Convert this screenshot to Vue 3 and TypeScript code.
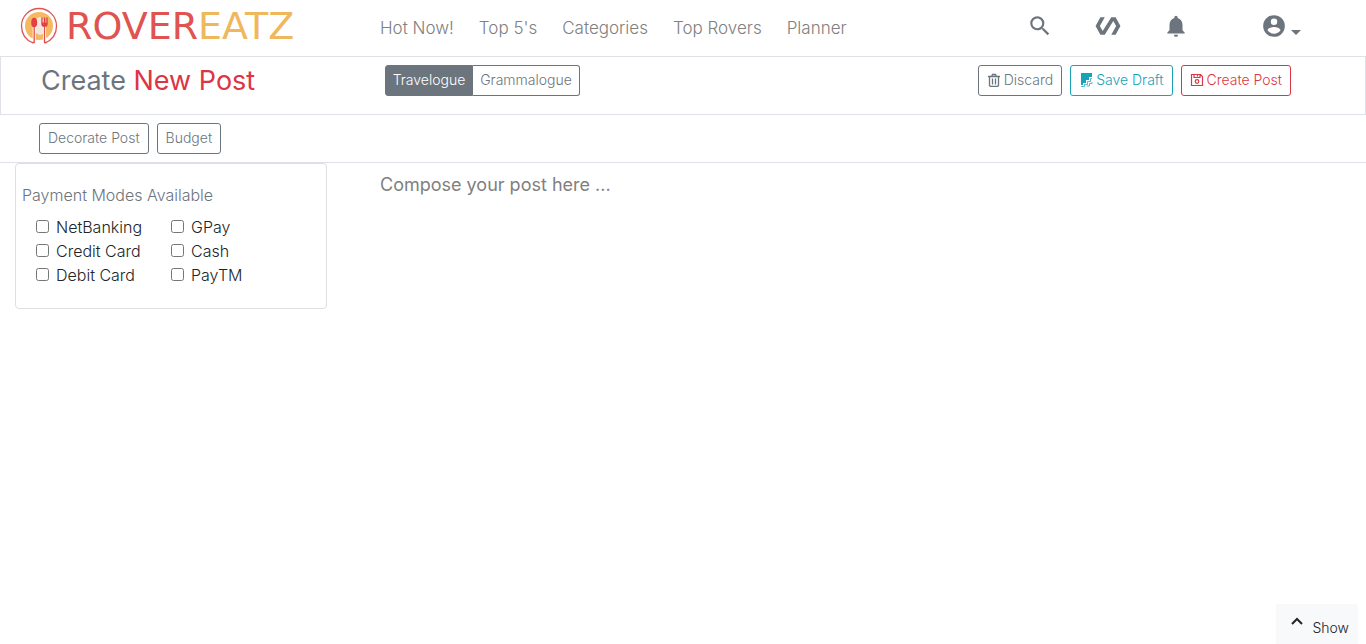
<script setup lang="ts">
import { ref } from 'vue'

const navLinks: string[] = ['Hot Now!', "Top 5's", 'Categories', 'Top Rovers', 'Planner']
const postKinds: string[] = ['Travelogue', 'Grammalogue']
const activeKind = ref<string>('Travelogue')
const paymentModes: string[] = ['NetBanking', 'GPay', 'Credit Card', 'Cash', 'Debit Card', 'PayTM']
const selectedModes = ref<string[]>([])
const body = ref<string>('')
</script>

<template>
  <div class="page">
    <header class="navbar columns">
      <a class="brand" href="#" aria-label="Rovereatz home">
        <svg class="brand-mark" viewBox="0 0 38 38" aria-hidden="true">
          <circle cx="19" cy="19" r="14" fill="#f5b962" />
          <ellipse cx="20" cy="19" rx="6" ry="9" fill="#f4e6dc" />
          <path d="M13 36C6 33 1.500 27 1.500 19a17.500 17.500 0 0 1 35 0c0 8-4.500 14-11.500 17" fill="none" stroke="#df5554" stroke-width="1.300" />
          <path d="M14.200 20v16M24.500 20v16" stroke="#fff" stroke-width="3" />
          <path d="M14.200 20v15.500h-2M24.500 20v15.500h2" fill="none" stroke="#df4e4e" stroke-width="1.300" />
          <ellipse cx="14.200" cy="15.500" rx="3" ry="4.800" fill="#e34045" />
          <path d="M21.300 10.500h1.300v5h1.200v-5h1.400v5h1.200v-5h1.300v6.500q0 3-3.200 3t-3.200-3z" fill="#e34045" />
        </svg>
        <span class="brand-name">ROVER<span class="gold">EATZ</span></span>
      </a>
      <nav class="nav-links" aria-label="Main">
        <a v-for="link in navLinks" :key="link" href="#">{{ link }}</a>
      </nav>
      <div class="nav-icons">
        <button type="button" aria-label="Search">
          <svg width="26" height="26" viewBox="0 0 24 24"><path d="M15.500 14h-.79l-.28-.27A6.470 6.470 0 0 0 16 9.500 6.500 6.500 0 1 0 9.500 16c1.610 0 3.090-.59 4.230-1.570l.27.28v.79l5 4.990L20.490 19l-4.990-5zm-6 0C7.010 14 5 11.990 5 9.500S7.010 5 9.500 5 14 7.010 14 9.500 11.990 14 9.500 14z" /></svg>
        </button>
        <button type="button" aria-label="Feed">
          <svg width="26" height="26" viewBox="0 0 24 24"><path d="M19 4h-4L7.110 16.630 4.500 12 9 4H5L.5 12 5 20h4l7.890-12.630L19.500 12 15 20h4l4.500-8z" /></svg>
        </button>
        <button type="button" aria-label="Notifications">
          <svg width="26" height="26" viewBox="0 0 24 24"><path d="M12 22c1.100 0 2-.9 2-2h-4c0 1.100.9 2 2 2zm6-6v-5c0-3.070-1.640-5.640-4.500-6.320V4c0-.83-.67-1.500-1.500-1.500s-1.500.67-1.500 1.500v.68C7.630 5.360 6 7.920 6 11v5l-2 2v1h16v-1l-2-2z" /></svg>
        </button>
        <button class="account" type="button" aria-label="Account menu">
          <svg width="26" height="26" viewBox="0 0 24 24"><path d="M12 2a10 10 0 1 0 0 20 10 10 0 0 0 0-20zm0 3a3 3 0 1 1 0 6 3 3 0 0 1 0-6zm0 14.200a7.200 7.200 0 0 1-6-3.220c.03-1.990 4-3.080 6-3.080s5.970 1.090 6 3.080a7.200 7.200 0 0 1-6 3.220z" /></svg>
          <span class="caret"></span>
        </button>
      </div>
    </header>

    <section class="title-bar columns">
      <h1>Create <span>New Post</span></h1>
      <div class="segments" role="group" aria-label="Post type">
        <button
          v-for="kind in postKinds"
          :key="kind"
          type="button"
          class="btn"
          :class="{ active: activeKind === kind }"
          :aria-pressed="activeKind === kind"
          @click="activeKind = kind"
        >{{ kind }}</button>
      </div>
      <div class="actions">
        <button type="button" class="btn">
          <svg width="14" height="14" viewBox="0 0 14 14" fill="none" stroke="currentColor" stroke-width="1.300"><path d="M1 3.500h12M4.500 3.500l1-2h3l1 2M2.500 3.500v9l1 1h7l1-1v-9M5.500 5.500v6M8.500 5.500v6" /></svg>
          Discard
        </button>
        <button type="button" class="btn info">
          <svg width="14" height="14" viewBox="0 0 14 14"><path d="M2 0h11v4h-3v3H7v3H4v2H2z" fill="currentColor" /><path d="M13 5.500h-1.500v3H8.500v3H5.500v2H2M13 9v1.500h-2.500V13H7.500" fill="none" stroke="currentColor" stroke-opacity=".7" /></svg>
          Save Draft
        </button>
        <button type="button" class="btn danger">
          <svg width="14" height="14" viewBox="0 0 14 14" fill="none" stroke="currentColor" stroke-width="1.200"><path d="M1.500 1.500h9l2 2v9h-11zM4 1.500v3h6v-3M7.500 2v1.500" /><circle cx="7" cy="8.500" r="1.800" /></svg>
          Create Post
        </button>
      </div>
    </section>

    <section class="tool-bar">
      <button type="button" class="btn">Decorate Post</button>
      <button type="button" class="btn">Budget</button>
    </section>

    <main class="workspace columns">
      <fieldset class="payments">
        <legend>Payment Modes Available</legend>
        <div class="modes">
          <label v-for="mode in paymentModes" :key="mode">
            <input v-model="selectedModes" type="checkbox" :value="mode" />
            {{ mode }}
          </label>
        </div>
      </fieldset>
      <textarea v-model="body" class="composer" aria-label="Post body" placeholder="Compose your post here ..."></textarea>
    </main>

    <button type="button" class="show">
      <svg width="12" height="8" viewBox="0 0 12 8" fill="none" stroke="currentColor" stroke-width="2"><path d="M1 7l5-5 5 5" /></svg>
      <span>Show</span>
    </button>
  </div>
</template>

<style>
body {
  margin: 0;
  background: #fff;
}
</style>

<style scoped>
.page {
  min-height: 100vh;
  font-family: Inter, "Liberation Sans", sans-serif;
  font-size: 16px;
  font-weight: 300;
  line-height: 24px;
  color: #212529;
}

.page *,
.page *::before {
  box-sizing: border-box;
}

button {
  font-family: inherit;
  font-weight: inherit;
  cursor: pointer;
}

.columns {
  display: grid;
  grid-template-columns: 380px minmax(0, 1fr) auto;
}

.navbar {
  height: 56px;
  align-items: center;
}

.brand {
  display: flex;
  align-items: center;
  gap: 8px;
  padding: 0 0 4px 20px;
  text-decoration: none;
}

.brand-mark {
  width: 38px;
  height: 38px;
}

.brand-name {
  font-family: "DejaVu Sans", sans-serif;
  font-size: 38px;
  font-weight: 400;
  line-height: 40px;
  color: #df5350;
}

.gold {
  color: #f0b85c;
}

.nav-links {
  display: flex;
  gap: 25px;
}

.nav-links a {
  color: #808080;
  font-size: 17px;
  text-decoration: none;
  white-space: nowrap;
}

.nav-icons {
  display: flex;
  align-items: center;
  gap: 42px;
  padding: 0 65px 4px 0;
}

.nav-icons button {
  display: flex;
  padding: 0;
  border: 0;
  background: none;
  color: #6c757d;
}

.nav-icons svg {
  fill: currentColor;
}

.nav-icons .account {
  align-items: center;
  gap: 4px;
  margin-left: 30px;
}

.caret {
  margin-top: 12px;
  border: 5px solid transparent;
  border-top-color: currentColor;
  border-bottom: 0;
}

.title-bar {
  min-height: 59px;
  padding-top: 8px;
  border: 1px solid #dee2e6;
  align-items: start;
}

h1 {
  margin: 0;
  padding-left: 40px;
  color: #6c757d;
  font-size: 27px;
  font-weight: 400;
  line-height: 32px;
}

h1 span {
  color: #dc3545;
}

.btn {
  display: inline-flex;
  align-items: center;
  justify-content: center;
  gap: 3px;
  height: 31px;
  padding: 0 8px 2px;
  border: 1px solid #6c757d;
  border-radius: 3px;
  background: #fff;
  color: #6c757d;
  font-size: 14px;
  line-height: 21px;
  white-space: nowrap;
}

.btn.active {
  background: #6c757d;
  color: #fff;
}

.btn.info {
  border-color: #17a2b8;
  color: #17a2b8;
}

.btn.danger {
  border-color: #dc3545;
  color: #dc3545;
}

.segments {
  display: grid;
  grid-template-columns: 88px 107px;
  padding-left: 4px;
}

.segments .btn {
  padding: 0 0 2px;
}

.segments .btn:first-child {
  border-radius: 3px 0 0 3px;
}

.segments .btn:last-child {
  border-left: 0;
  border-radius: 0 3px 3px 0;
}

.actions {
  display: flex;
  gap: 8px;
  padding-right: 74px;
}

.tool-bar {
  display: flex;
  gap: 8px;
  padding: 8px 39px;
  border-bottom: 1px solid #dee2e6;
}

.payments {
  min-width: 0;
  min-height: 146px;
  margin: 0 53px 0 15px;
  padding: 19px 6px;
  border: 1px solid #dfdfdf;
  border-radius: 4px;
  align-self: start;
}

.payments legend {
  float: left;
  width: 100%;
  padding: 0;
  color: #6c757d;
}

.modes {
  display: grid;
  grid-template-columns: 135px 1fr;
  clear: both;
  padding: 8px 0 0 14px;
}

.modes label {
  display: flex;
  align-items: center;
  gap: 7px;
  white-space: nowrap;
}

.modes input {
  width: 13px;
  height: 13px;
  margin: 0 0 2px;
}

.composer {
  height: 320px;
  padding: 8px 0;
  border: 0;
  outline: 0;
  resize: none;
  background: none;
  font-family: inherit;
  font-size: 18px;
  line-height: 27px;
}

.composer::placeholder {
  color: #808080;
}

.show {
  position: fixed;
  right: 8px;
  bottom: 0;
  display: flex;
  align-items: flex-start;
  gap: 9px;
  height: 40px;
  padding: 12px 9px 0 15px;
  border: 0;
  border-radius: 3px 3px 0 0;
  background: #f8f9fa;
  color: #212529;
  font-size: 14px;
  line-height: 24px;
}

.show svg {
  margin-top: 1px;
}
</style>
